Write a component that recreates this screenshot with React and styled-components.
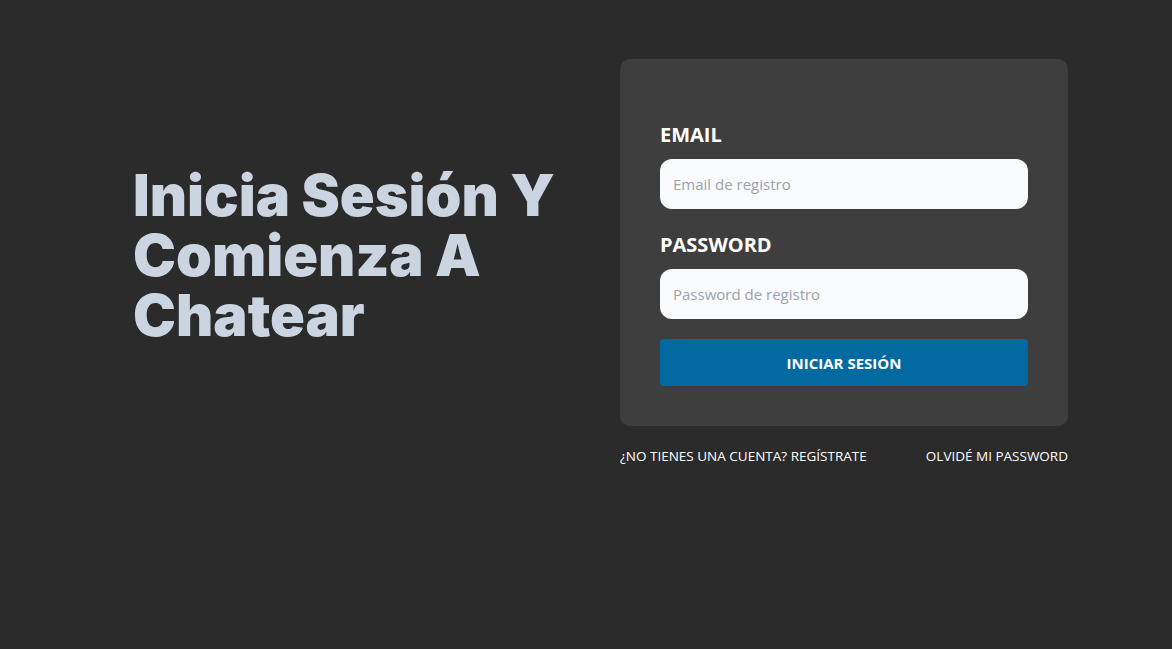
import React from 'react';
import styled, { createGlobalStyle } from 'styled-components';

const GlobalStyle = createGlobalStyle`
  * { box-sizing: border-box; }
  html, body {
    margin: 0;
    background: #2b2b2b;
    font-family: 'Open Sans', 'Noto Sans', sans-serif;
  }
`;

const Page = styled.main`
  min-height: 649px;
  padding: 59px 0 0 133px;
  display: flex;
  align-items: flex-start;
`;

const Intro = styled.div`
  width: 487px;
  padding-top: 106px;
`;

const Heading = styled.h1`
  margin: 0;
  font-family: 'Inter', sans-serif;
  font-weight: 900;
  font-size: 57.5px;
  line-height: 60px;
  color: #cbd5e1;
`;

const Side = styled.div`
  width: 448px;
`;

const Card = styled.form`
  background: #3e3e3e;
  border-radius: 10px;
  padding: 62px 40px 40px;
  display: flex;
  flex-direction: column;
`;

const Field = styled.div`
  display: flex;
  flex-direction: column;
  gap: 10px;

  & + & {
    margin-top: 22px;
  }
`;

const Label = styled.label`
  color: #ffffff;
  font-weight: 700;
  font-size: 20px;
  line-height: 28px;
  text-transform: uppercase;
`;

const Input = styled.input`
  width: 100%;
  height: 50px;
  border: none;
  border-radius: 12px;
  background: #f8fafc;
  padding: 0 13px;
  font-family: inherit;
  font-size: 15px;
  color: #1f2937;
  outline: none;

  &::placeholder {
    color: #9ca3af;
  }
`;

const Submit = styled.button`
  height: 47px;
  margin-top: 20px;
  border: none;
  border-radius: 4px;
  background: #0369a1;
  color: #ffffff;
  font-family: inherit;
  font-weight: 700;
  font-size: 15px;
  text-transform: uppercase;
  cursor: pointer;
`;

const Links = styled.nav`
  display: flex;
  justify-content: space-between;
  margin-top: 21px;
`;

const LinkText = styled.a`
  color: #ffffff;
  font-size: 13.5px;
  text-decoration: none;
  text-transform: uppercase;
`;

export default function App() {
  return (
    <>
      <GlobalStyle />
      <Page>
        <Intro>
          <Heading>Inicia Sesión Y Comienza A Chatear</Heading>
        </Intro>
        <Side>
          <Card onSubmit={(e) => e.preventDefault()}>
            <Field>
              <Label htmlFor="email">Email</Label>
              <Input id="email" type="email" placeholder="Email de registro" />
            </Field>
            <Field>
              <Label htmlFor="password">Password</Label>
              <Input id="password" type="password" placeholder="Password de registro" />
            </Field>
            <Submit type="submit">Iniciar Sesión</Submit>
          </Card>
          <Links>
            <LinkText href="#">¿No tienes una cuenta? Regístrate</LinkText>
            <LinkText href="#">Olvidé mi Password</LinkText>
          </Links>
        </Side>
      </Page>
    </>
  );
}
